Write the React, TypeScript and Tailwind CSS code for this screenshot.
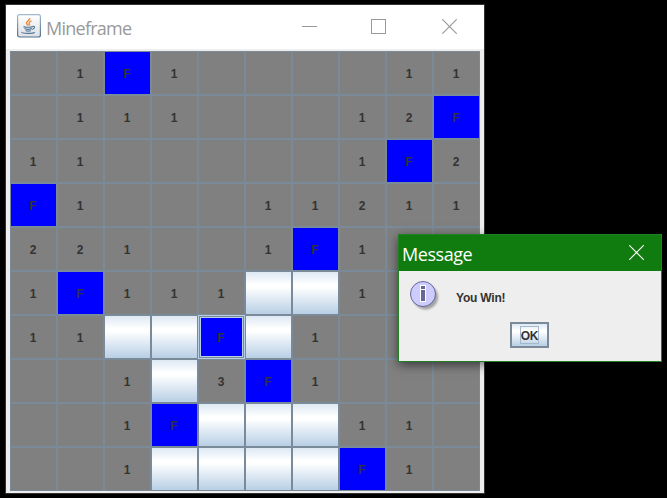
import React from "react";

// "#" is an unopened square, "." an opened square with no neighbouring mines.
const board: string[] = [
  ".1F1....11",
  ".111...12F",
  "11.....1F2",
  "F1...11211",
  "221..1F1..",
  "1F111##1..",
  "11##F#1...",
  "..1#3F1...",
  "..1F###11.",
  "..1####F1.",
];

const focused = { row: 6, col: 4 };

const metal = "bg-[linear-gradient(to_bottom,#dde8f3_0%,#ffffff_30%,#ffffff_36%,#b8cfe5_100%)]";

function Cell({ value, focus }: { value: string; focus: boolean }) {
  const fill = value === "F" ? "bg-[#0000ff]" : value === "#" ? metal : "bg-[#808080]";
  const label = value === "." || value === "#" ? "" : value;
  if (focus) {
    return (
      <div className="border border-[#b8cfe5] bg-[#7a8a99] p-px">
        <div className="flex h-full w-full items-center justify-center border border-[#b8cfe5] bg-[#0000ff] pt-px pr-px">
          {label}
        </div>
      </div>
    );
  }
  return (
    <div className={`flex items-center justify-center border border-[#7a8a99] pt-px pr-px ${fill}`}>{label}</div>
  );
}

function CloseIcon({ className }: { className: string }) {
  return (
    <svg width="15" height="15" viewBox="0 0 15 15" className={className} fill="none" stroke="currentColor">
      <path d="M.3 .3l14.4 14.4M14.7 .3L.3 14.7" strokeWidth="1.15" />
    </svg>
  );
}

function JavaIcon() {
  return (
    <svg width="24" height="24" viewBox="0 0 24 24" fill="none">
      <defs>
        <linearGradient id="tile" x1="0" y1="0" x2="0" y2="1">
          <stop offset="0" stopColor="#fff" />
          <stop offset="1" stopColor="#dedfe3" />
        </linearGradient>
        <linearGradient id="rim" x1="0" y1="0" x2="0" y2="1">
          <stop offset="0" stopColor="#a3b9cf" />
          <stop offset="1" stopColor="#4f718e" />
        </linearGradient>
      </defs>
      <rect x=".6" y=".6" width="22.8" height="22.4" rx="2" fill="url(#tile)" stroke="url(#rim)" strokeWidth="1.2" />
      <path d="M12.7 4c.7 2.2-3.5 3-3.2 5.1.1 1 1.3 1.6 1.8 2.4M14.5 6.8c-1.5.6-2.6 1.3-2.4 2.4.1.8.9 1.2.3 2.3" stroke="#ed8b35" strokeWidth="1.4" />
      <path d="M6.5 12.6c2 .8 7 .8 9.2 0M7.5 14.6c2 .9 5.5.9 7.5 0M8.5 16.5c1.5.7 4 .7 5.5 0M15.5 12.5c3-.8 2.5 2.3-.3 3M5 18c-1.5 1.8 11.5 2 12.7.1" stroke="#547b9c" strokeWidth="1.15" />
    </svg>
  );
}

function InfoIcon() {
  return (
    <svg width="32" height="32" viewBox="0 0 32 32">
      <defs>
        <filter id="soft" x="-20%" y="-20%" width="150%" height="150%">
          <feGaussianBlur stdDeviation="1.3" />
        </filter>
      </defs>
      <circle cx="15.5" cy="16" r="12.5" fill="#888" opacity=".75" filter="url(#soft)" />
      <circle cx="13" cy="13" r="12.5" fill="#ccccff" stroke="#666699" />
      <rect x="10" y="4" width="6" height="17" fill="#fff" />
      <path d="M11 5h4v3h-4zM11 9h4v11h-4z" fill="#666699" />
    </svg>
  );
}

export default function App() {
  return (
    <div className="relative h-[498px] w-[667px] overflow-hidden bg-black pt-1 pl-[5px] font-['Liberation_Sans',Arial,sans-serif] text-xs font-bold text-[#333]">
      <main className="flex h-[490px] w-[480px] flex-col border border-[#333] bg-[#eee]">
        <header className="flex h-11 shrink-0 items-center bg-white pl-[11px] text-[#999]">
          <div className="mb-[3px]">
            <JavaIcon />
          </div>
          <h1 className="ml-[5px] w-[256px] pt-0.5 font-['Open_Sans','Noto_Sans',sans-serif] text-[18px] leading-6 font-normal tracking-[-0.75px]">
            Mineframe
          </h1>
          <div className="mb-px h-px w-[15px] bg-[#999]" />
          <div className="mb-px ml-[54px] h-[15px] w-[15px] border border-[#999]" />
          <CloseIcon className="mb-px ml-[56px]" />
        </header>
        <section className="mt-0.5 ml-1 grid h-[440px] w-[470px] shrink-0 grid-cols-[repeat(10,47px)] grid-rows-[repeat(10,44px)]">
          {board.flatMap((line, row) =>
            line.split("").map((value, col) => (
              <Cell key={`${row}-${col}`} value={value} focus={row === focused.row && col === focused.col} />
            )),
          )}
        </section>
      </main>

      <div className="absolute top-[234px] left-[398px] flex h-32 w-[264px] flex-col border border-[#228022] bg-[#eee] shadow-[0_3px_10px_rgba(0,0,0,0.55)]">
        <header className="flex h-9 shrink-0 items-center justify-between bg-[#107c10] pr-[17px] pl-[3px] text-white">
          <h2 className="pt-px font-['Open_Sans','Noto_Sans',sans-serif] text-[18px] leading-6 font-normal tracking-[-0.45px]">
            Message
          </h2>
          <CloseIcon className="mb-px" />
        </header>
        <div className="flex h-[51px] shrink-0 pt-[10px] pl-[11px]">
          <InfoIcon />
          <p className="ml-[14px] pt-[9px] leading-4 tracking-[-0.2px]">You Win!</p>
        </div>
        <button className={`ml-[111px] flex h-[26px] w-[39px] items-center justify-center border-2 border-[#7a8a99] ${metal}`}>
          <span className="flex h-[18px] w-[19px] items-center justify-center border border-[#a3b8cc] pt-px tracking-[-0.3px]">OK</span>
        </button>
      </div>
    </div>
  );
}
